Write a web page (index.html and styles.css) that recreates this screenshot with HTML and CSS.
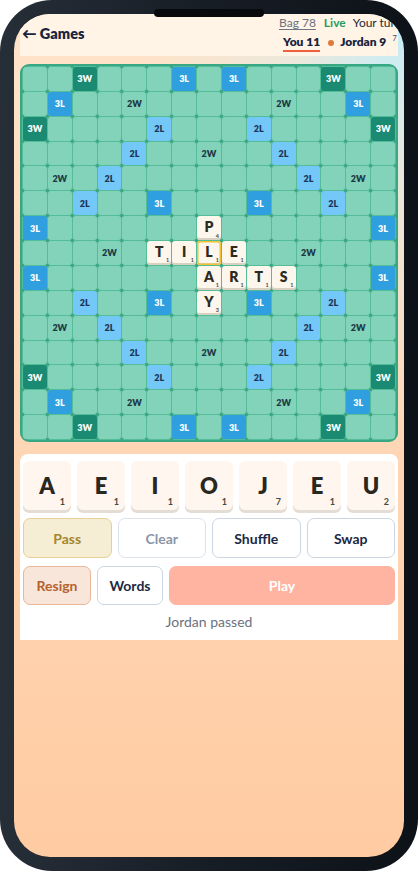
FILE: index.html
```html
<!DOCTYPE html>
<html>
<head>
<meta charset="utf-8">
<link rel="stylesheet" href="styles.css">
</head>
<body>
<div class="phone">
  <div class="notch"></div>
  <div class="screen">
    <header class="hdr">
      <div class="back">← Games</div>
      <div class="status">
        <div class="line1"><span class="bag">Bag 78</span><span class="live">Live</span><span class="turn">Your turn</span></div>
        <div class="line2"><span class="you">You 11</span><span class="dot"></span><span class="opp">Jordan 9</span><span class="sup">7</span></div>
      </div>
    </header>

    <div class="board">
      <span class="q"></span><span class="q"></span><span class="q tw">3W</span><span class="q"></span><span class="q"></span><span class="q"></span><span class="q tl">3L</span><span class="q"></span><span class="q tl">3L</span><span class="q"></span><span class="q"></span><span class="q"></span><span class="q tw">3W</span><span class="q"></span><span class="q"></span>
      <span class="q"></span><span class="q tl">3L</span><span class="q"></span><span class="q"></span><span class="q dw">2W</span><span class="q"></span><span class="q"></span><span class="q"></span><span class="q"></span><span class="q"></span><span class="q dw">2W</span><span class="q"></span><span class="q"></span><span class="q tl">3L</span><span class="q"></span>
      <span class="q tw">3W</span><span class="q"></span><span class="q"></span><span class="q"></span><span class="q"></span><span class="q dl">2L</span><span class="q"></span><span class="q"></span><span class="q"></span><span class="q dl">2L</span><span class="q"></span><span class="q"></span><span class="q"></span><span class="q"></span><span class="q tw">3W</span>
      <span class="q"></span><span class="q"></span><span class="q"></span><span class="q"></span><span class="q dl">2L</span><span class="q"></span><span class="q"></span><span class="q dw">2W</span><span class="q"></span><span class="q"></span><span class="q dl">2L</span><span class="q"></span><span class="q"></span><span class="q"></span><span class="q"></span>
      <span class="q"></span><span class="q dw">2W</span><span class="q"></span><span class="q dl">2L</span><span class="q"></span><span class="q"></span><span class="q"></span><span class="q"></span><span class="q"></span><span class="q"></span><span class="q"></span><span class="q dl">2L</span><span class="q"></span><span class="q dw">2W</span><span class="q"></span>
      <span class="q"></span><span class="q"></span><span class="q dl">2L</span><span class="q"></span><span class="q"></span><span class="q tl">3L</span><span class="q"></span><span class="q"></span><span class="q"></span><span class="q tl">3L</span><span class="q"></span><span class="q"></span><span class="q dl">2L</span><span class="q"></span><span class="q"></span>
      <span class="q tl">3L</span><span class="q"></span><span class="q"></span><span class="q"></span><span class="q"></span><span class="q"></span><span class="q"></span><span class="q t">P<sub>4</sub></span><span class="q"></span><span class="q"></span><span class="q"></span><span class="q"></span><span class="q"></span><span class="q"></span><span class="q tl">3L</span>
      <span class="q"></span><span class="q"></span><span class="q"></span><span class="q dw">2W</span><span class="q"></span><span class="q t">T<sub>1</sub></span><span class="q t">I<sub>1</sub></span><span class="q t hl">L<sub>1</sub></span><span class="q t">E<sub>1</sub></span><span class="q"></span><span class="q"></span><span class="q dw">2W</span><span class="q"></span><span class="q"></span><span class="q"></span>
      <span class="q tl">3L</span><span class="q"></span><span class="q"></span><span class="q"></span><span class="q"></span><span class="q"></span><span class="q"></span><span class="q t">A<sub>1</sub></span><span class="q t">R<sub>1</sub></span><span class="q t">T<sub>1</sub></span><span class="q t">S<sub>1</sub></span><span class="q"></span><span class="q"></span><span class="q"></span><span class="q tl">3L</span>
      <span class="q"></span><span class="q"></span><span class="q dl">2L</span><span class="q"></span><span class="q"></span><span class="q tl">3L</span><span class="q"></span><span class="q t">Y<sub>3</sub></span><span class="q"></span><span class="q tl">3L</span><span class="q"></span><span class="q"></span><span class="q dl">2L</span><span class="q"></span><span class="q"></span>
      <span class="q"></span><span class="q dw">2W</span><span class="q"></span><span class="q dl">2L</span><span class="q"></span><span class="q"></span><span class="q"></span><span class="q"></span><span class="q"></span><span class="q"></span><span class="q"></span><span class="q dl">2L</span><span class="q"></span><span class="q dw">2W</span><span class="q"></span>
      <span class="q"></span><span class="q"></span><span class="q"></span><span class="q"></span><span class="q dl">2L</span><span class="q"></span><span class="q"></span><span class="q dw">2W</span><span class="q"></span><span class="q"></span><span class="q dl">2L</span><span class="q"></span><span class="q"></span><span class="q"></span><span class="q"></span>
      <span class="q tw">3W</span><span class="q"></span><span class="q"></span><span class="q"></span><span class="q"></span><span class="q dl">2L</span><span class="q"></span><span class="q"></span><span class="q"></span><span class="q dl">2L</span><span class="q"></span><span class="q"></span><span class="q"></span><span class="q"></span><span class="q tw">3W</span>
      <span class="q"></span><span class="q tl">3L</span><span class="q"></span><span class="q"></span><span class="q dw">2W</span><span class="q"></span><span class="q"></span><span class="q"></span><span class="q"></span><span class="q"></span><span class="q dw">2W</span><span class="q"></span><span class="q"></span><span class="q tl">3L</span><span class="q"></span>
      <span class="q"></span><span class="q"></span><span class="q tw">3W</span><span class="q"></span><span class="q"></span><span class="q"></span><span class="q tl">3L</span><span class="q"></span><span class="q tl">3L</span><span class="q"></span><span class="q"></span><span class="q"></span><span class="q tw">3W</span><span class="q"></span><span class="q"></span>
    </div>

    <section class="card">
      <div class="rack">
        <div class="rt">A<span class="rs">1</span></div>
        <div class="rt">E<span class="rs">1</span></div>
        <div class="rt">I<span class="rs">1</span></div>
        <div class="rt">O<span class="rs">1</span></div>
        <div class="rt">J<span class="rs">7</span></div>
        <div class="rt">E<span class="rs">1</span></div>
        <div class="rt">U<span class="rs">2</span></div>
      </div>
      <div class="row1">
        <div class="btn pass">Pass</div>
        <div class="btn clear">Clear</div>
        <div class="btn plain">Shuffle</div>
        <div class="btn plain">Swap</div>
      </div>
      <div class="row2">
        <div class="btn resign">Resign</div>
        <div class="btn plain words">Words</div>
        <div class="btn play">Play</div>
      </div>
      <div class="msg">Jordan passed</div>
    </section>
  </div>
</div>
</body>
</html>
```

FILE: styles.css
```css
html, body {
  margin: 0;
  padding: 0;
  background: #ffffff;
}
body {
  font-family: Lato, "Noto Sans", sans-serif;
}
.phone {
  position: relative;
  width: 418px;
  height: 871px;
  box-sizing: border-box;
  padding: 14px;
  border-radius: 52px;
  background: linear-gradient(90deg, #262e38 0%, #171d25 50%, #0d1218 100%);
}
.notch {
  position: absolute;
  top: 9px;
  left: 154px;
  width: 110px;
  height: 8px;
  border-radius: 4px;
  background: #07090d;
  z-index: 3;
}
.screen {
  height: 100%;
  box-sizing: border-box;
  border-radius: 36px;
  overflow: hidden;
  padding: 0 6px;
  display: flex;
  flex-direction: column;
  background:
    radial-gradient(ellipse 260px 420px at 100% 0%, #c3edf9 0%, rgba(220, 236, 235, 0.6) 40%, rgba(255, 225, 200, 0) 100%),
    linear-gradient(180deg, #ffe4ca 0%, #ffd8b8 45%, #ffcba2 100%);
}

/* header */
.hdr {
  flex-shrink: 0;
  height: 42px;
  background: #fff4e6;
  display: flex;
  align-items: center;
  justify-content: space-between;
  overflow: hidden;
  padding-left: 2px;
}
.back {
  font-size: 14.5px;
  font-weight: 800;
  color: #1a2440;
  margin-top: -4px;
}
.status {
  width: 119px;
  flex-shrink: 0;
  align-self: stretch;
  display: flex;
  flex-direction: column;
  padding-top: 1px;
  white-space: nowrap;
}
.line1 {
  display: flex;
  height: 16px;
  line-height: 16px;
  font-size: 12px;
}
.line1 span,
.line2 span {
  flex-shrink: 0;
}
.bag {
  color: #6b7280;
  text-decoration: underline;
  text-underline-offset: 2px;
  margin-right: 8px;
}
.live {
  color: #1f9d63;
  font-weight: 700;
  margin-right: 7px;
}
.turn {
  color: #1f2937;
}
.line2 {
  display: flex;
  align-items: flex-start;
  margin-top: 4px;
  padding-left: 4px;
  font-size: 12px;
  font-weight: 800;
  color: #1a2440;
  line-height: 14px;
}
.you {
  padding-bottom: 1px;
  border-bottom: 2px solid #f0603f;
}
.dot {
  width: 6px;
  height: 6px;
  border-radius: 50%;
  background: #e07a3a;
  margin: 5px 6px 0 8px;
}
.sup {
  font-size: 8px;
  font-weight: 400;
  color: #4b5563;
  margin-left: 6px;
  line-height: 10px;
  margin-top: -2px;
}

/* board */
.board {
  flex-shrink: 0;
  margin-top: 8px;
  width: 378px;
  height: 378px;
  box-sizing: border-box;
  border: 2px solid #38a784;
  border-radius: 9px;
  padding: 1px;
  display: grid;
  grid-template-columns: repeat(15, 1fr);
  grid-template-rows: repeat(15, 1fr);
  gap: 1px;
  background-color: #55bc98;
  background-image: radial-gradient(circle, #3aa582 1.4px, rgba(58, 165, 130, 0) 1.9px);
  background-size: 24.867px 24.867px;
  background-origin: content-box;
  background-position: 11.93px 11.93px;
}
.q {
  background: #83d2ba;
  border-radius: 3px;
  display: flex;
  align-items: center;
  justify-content: center;
  font-size: 9px;
  font-weight: 800;
  line-height: 1;
}
.tw {
  background: #1b8a72;
  color: #ffffff;
}
.tl {
  background: #2f9fe0;
  color: #ffffff;
}
.dl {
  background: #74c8f7;
  color: #1d3454;
}
.dw {
  color: #1d3a44;
}
.t {
  position: relative;
  background: #fcf6ec;
  box-shadow: inset 0 -2px 0 #d9d0c1;
  color: #2d2a21;
  font-size: 14px;
  font-weight: 800;
  padding-bottom: 2px;
  box-sizing: border-box;
}
.t sub {
  position: absolute;
  right: 2px;
  bottom: 1px;
  font-size: 5.5px;
  font-weight: 700;
  line-height: 1;
  color: #4a463c;
}
.hl {
  box-shadow: inset 0 0 0 1.5px #f2c234, inset 0 -2px 0 #d9d0c1;
}

/* card */
.card {
  flex-shrink: 0;
  margin-top: 12px;
  background: #ffffff;
  border-radius: 8px 8px 0 0;
  padding: 7px 3px 8px;
}
.rack {
  display: flex;
  gap: 6px;
}
.rt {
  position: relative;
  flex: 1;
  height: 49px;
  background: #fff6ef;
  border-radius: 6px;
  box-shadow: 0 3px 0 #e4ddd5;
  display: flex;
  align-items: center;
  justify-content: center;
  font-size: 22px;
  font-weight: 800;
  color: #29281f;
}
.rs {
  position: absolute;
  right: 6px;
  bottom: 4px;
  font-size: 9px;
  font-weight: 700;
  line-height: 1;
  color: #4a483e;
}
.row1 {
  margin-top: 8px;
  display: grid;
  grid-template-columns: repeat(4, 1fr);
  gap: 6px;
}
.row2 {
  margin-top: 7.5px;
  display: flex;
  gap: 6px;
}
.btn {
  height: 40px;
  box-sizing: border-box;
  border-radius: 7px;
  border: 1px solid #cbd6e2;
  background: #ffffff;
  color: #1c2844;
  font-size: 14px;
  font-weight: 700;
  display: flex;
  align-items: center;
  justify-content: center;
}
.row2 .btn {
  height: 39px;
}
.pass {
  background: #f6edd5;
  border-color: #e6d095;
  color: #a3872c;
}
.clear {
  border-color: #dce3eb;
  color: #8b95a7;
}
.resign {
  width: 68px;
  background: #f8e6da;
  border-color: #e9b697;
  color: #b6612e;
}
.words {
  width: 66px;
}
.play {
  flex: 1;
  background: #ffb4a1;
  border-color: #ffb4a1;
  color: #ffffff;
}
.msg {
  margin-top: 7px;
  text-align: center;
  font-size: 14px;
  line-height: 20px;
  color: #6b7280;
}
```
